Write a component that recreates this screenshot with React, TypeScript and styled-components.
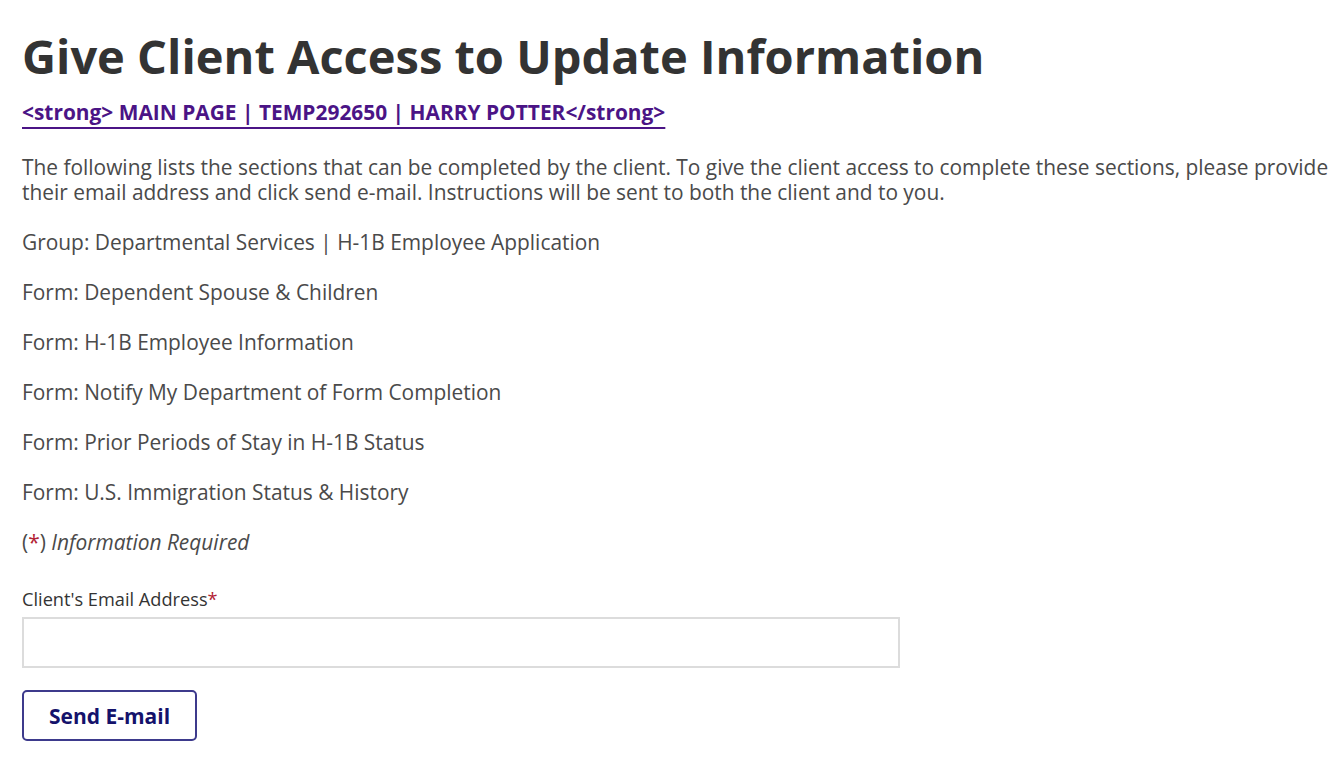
import styled, { createGlobalStyle } from "styled-components";

const GlobalStyle = createGlobalStyle`
  body {
    margin: 0;
    background: #fff;
    font-family: "Open Sans", "Liberation Sans", sans-serif;
    color: #4a4a4a;
  }
`;

const Page = styled.main`
  padding: 20px 10px 20px 22px;
`;

const Title = styled.h1`
  margin: 0;
  font-size: 47px;
  line-height: 72px;
  font-weight: 700;
  color: #333;
`;

const Crumbs = styled.a`
  display: inline-block;
  margin-top: 8px;
  font-size: 20.9px;
  line-height: 24px;
  font-weight: 700;
  color: #4b1486;
  text-decoration: underline;
  text-underline-offset: 7px;
`;

const Text = styled.p`
  margin: 25px 0 0;
  font-size: 20.9px;
  line-height: 25px;
`;

const Intro = styled(Text)`
  margin-top: 30px;
`;

const Req = styled.span`
  color: #b22234;
`;

const Label = styled.label`
  display: block;
  margin-top: 33px;
  font-size: 18.2px;
  line-height: 22px;
  color: #333;
`;

const Input = styled.input`
  display: block;
  box-sizing: border-box;
  margin-top: 7px;
  width: 878px;
  height: 51px;
  border: 2px solid #dcdcdc;
  background: #fff;
  font: inherit;
`;

const Button = styled.button`
  margin-top: 22px;
  width: 175px;
  height: 51px;
  box-sizing: border-box;
  border: 2px solid #3d3a8c;
  border-radius: 5px;
  background: #fff;
  color: #14126b;
  font-family: "Open Sans", "Liberation Sans", sans-serif;
  font-size: 21px;
  font-weight: 700;
`;

const forms = [
  "Form: Dependent Spouse & Children",
  "Form: H-1B Employee Information",
  "Form: Notify My Department of Form Completion",
  "Form: Prior Periods of Stay in H-1B Status",
  "Form: U.S. Immigration Status & History",
];

export default function App() {
  return (
    <>
      <GlobalStyle />
      <Page>
        <Title>Give Client Access to Update Information</Title>
        <Crumbs href="#">&lt;strong&gt; MAIN PAGE | TEMP292650 | HARRY POTTER&lt;/strong&gt;</Crumbs>
        <Intro>
          The following lists the sections that can be completed by the client. To give the client access to complete
          these sections, please provide their email address and click send e-mail. Instructions will be sent to both
          the client and to you.
        </Intro>
        <Text>Group: Departmental Services | H-1B Employee Application</Text>
        {forms.map((f) => (
          <Text key={f}>{f}</Text>
        ))}
        <Text>
          (<Req>*</Req>) <em>Information Required</em>
        </Text>
        <Label htmlFor="email">
          Client's Email Address<Req>*</Req>
        </Label>
        <Input id="email" type="email" />
        <Button type="button">Send E-mail</Button>
      </Page>
    </>
  );
}
